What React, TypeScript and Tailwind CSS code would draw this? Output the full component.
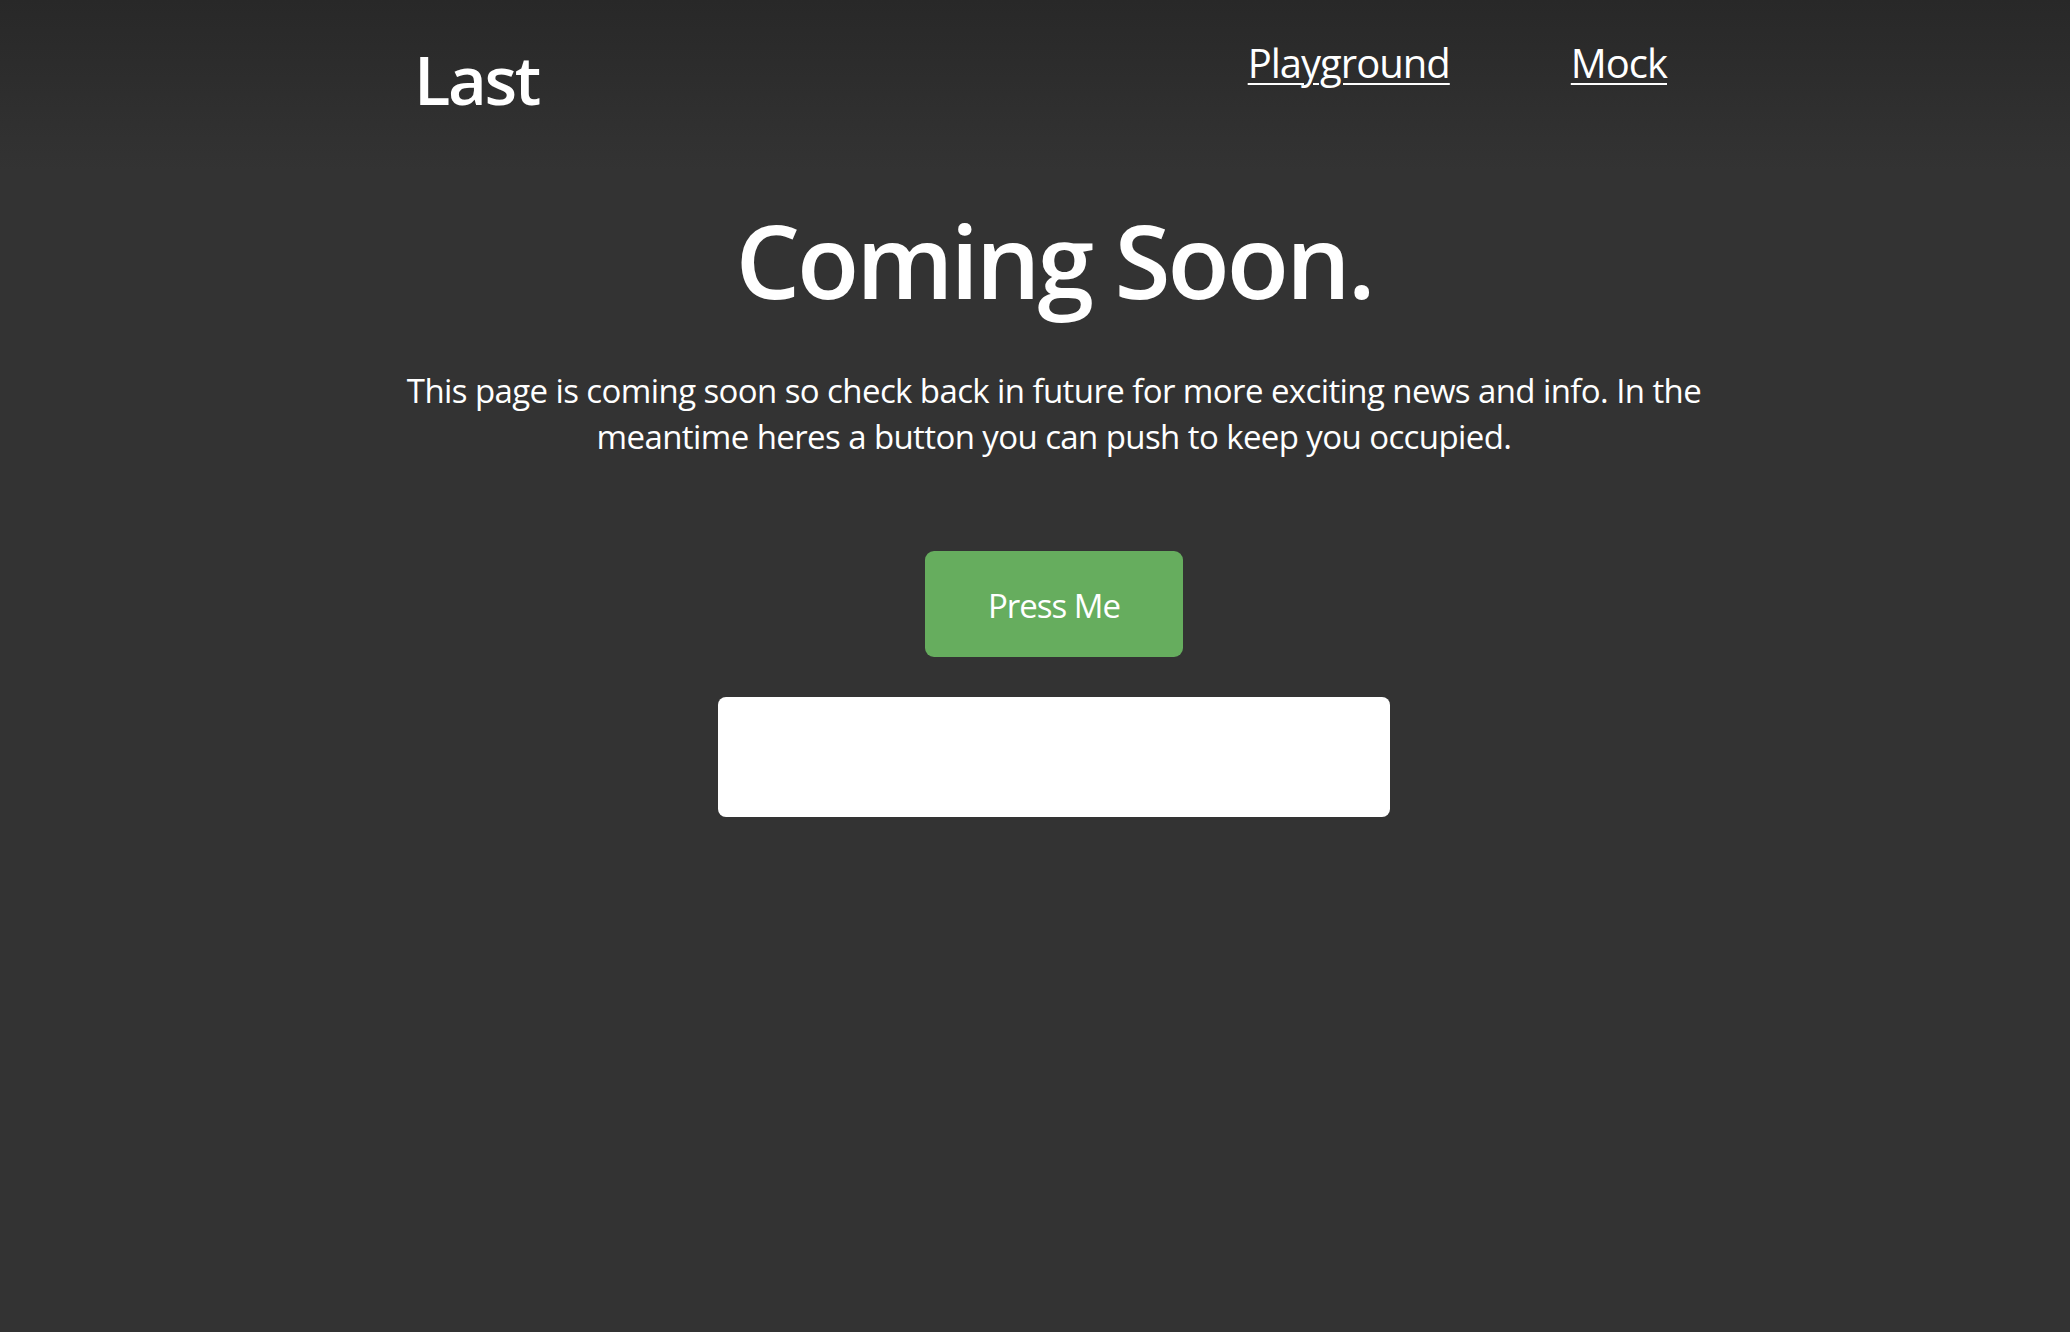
import React, { useState } from "react";

const App = () => {
  const [count, setCount] = useState(0);

  return (
    <div className="min-h-screen bg-[#333333] text-white font-['Open_Sans',sans-serif]">
      {/* header */}
      <header className="h-[170px] bg-linear-to-b from-[#282828] to-[#333333]">
        <div className="flex justify-center pl-4 pt-[40px]">
          <div className="w-[1248px] flex justify-between items-start">
            <h2 className="mt-[6px] -ml-[5px] text-[67px] leading-none font-semibold tracking-[-0.035em]">Last</h2>
            <nav className="mt-[3px] flex items-center gap-[121px] text-[40px] leading-none tracking-[-0.025em]">
              <a href="#" className="underline underline-offset-[5px] decoration-2">Playground</a>
              <a href="#" className="underline underline-offset-[5px] decoration-2">Mock</a>
            </nav>
          </div>
        </div>
      </header>

      <main className="flex justify-center pl-[38px] pt-[39px]">
        <div className="flex flex-col items-center w-[1400px]">
          <h1 className="text-[102px] leading-none font-semibold tracking-[-0.03em]">Coming Soon.</h1>
          <p className="mt-[57px] text-[33px] leading-[46px] text-center tracking-[-0.018em] w-[1340px]">
            This page is coming soon so check back in future for more exciting news and info. In the meantime heres a button you can push to keep you occupied.
          </p>
          <button
            onClick={() => setCount(count + 1)}
            className="mt-[91px] w-[258px] h-[106px] rounded-[9px] bg-[#66ad5e] flex items-center justify-center pt-[2px] text-[33px] leading-none tracking-[-0.03em] cursor-pointer"
          >
            Press Me
          </button>
          <div className="mt-[40px] w-[672px] h-[120px] rounded-lg bg-white text-[#333333] text-[33px] flex items-center justify-center">
            {count > 0 ? count : ""}
          </div>
        </div>
      </main>
    </div>
  );
};

export default App;
